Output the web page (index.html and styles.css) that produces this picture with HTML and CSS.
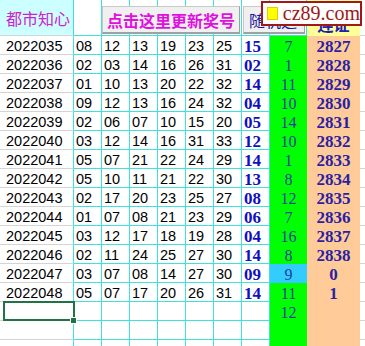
FILE: index.html
```html
<!DOCTYPE html>
<html>
<head>
<meta charset="utf-8">
<link rel="stylesheet" href="styles.css">
</head>
<body>
<div class="head">
  <div class="c h-a">都市知心</div>
  <div class="c h"></div>
  <div class="c h"></div>
  <div class="c h"></div>
  <div class="c h"></div>
  <div class="c h"></div>
  <div class="c h"></div>
  <div class="c h"></div>
  <div class="c h"></div>
  <div class="c h-o">连证</div>
  <div class="c x"></div>
  <button class="btn btn1">点击这里更新奖号</button>
  <button class="btn btn2">随机选号</button>
</div>
<div class="sheet">
  <div class="c a">2022035</div><div class="c n">08</div><div class="c n">12</div><div class="c n">13</div><div class="c n">19</div><div class="c n">23</div><div class="c n">25</div><div class="c b">15</div><div class="c g">7</div><div class="c o">2827</div><div class="c x"></div>
  <div class="c a">2022036</div><div class="c n">02</div><div class="c n">03</div><div class="c n">14</div><div class="c n">16</div><div class="c n">26</div><div class="c n">31</div><div class="c b">02</div><div class="c g">1</div><div class="c o">2828</div><div class="c x"></div>
  <div class="c a">2022037</div><div class="c n">01</div><div class="c n">10</div><div class="c n">13</div><div class="c n">20</div><div class="c n">22</div><div class="c n">32</div><div class="c b">14</div><div class="c g">11</div><div class="c o">2829</div><div class="c x"></div>
  <div class="c a">2022038</div><div class="c n">09</div><div class="c n">12</div><div class="c n">13</div><div class="c n">16</div><div class="c n">24</div><div class="c n">32</div><div class="c b">04</div><div class="c g">10</div><div class="c o">2830</div><div class="c x"></div>
  <div class="c a">2022039</div><div class="c n">02</div><div class="c n">06</div><div class="c n">07</div><div class="c n">10</div><div class="c n">15</div><div class="c n">20</div><div class="c b">05</div><div class="c g">14</div><div class="c o">2831</div><div class="c x"></div>
  <div class="c a">2022040</div><div class="c n">03</div><div class="c n">12</div><div class="c n">14</div><div class="c n">16</div><div class="c n">31</div><div class="c n">33</div><div class="c b">12</div><div class="c g">10</div><div class="c o">2832</div><div class="c x"></div>
  <div class="c a">2022041</div><div class="c n">05</div><div class="c n">07</div><div class="c n">21</div><div class="c n">22</div><div class="c n">24</div><div class="c n">29</div><div class="c b">14</div><div class="c g">1</div><div class="c o">2833</div><div class="c x"></div>
  <div class="c a">2022042</div><div class="c n">05</div><div class="c n">10</div><div class="c n">11</div><div class="c n">21</div><div class="c n">22</div><div class="c n">30</div><div class="c b">13</div><div class="c g">8</div><div class="c o">2834</div><div class="c x"></div>
  <div class="c a">2022043</div><div class="c n">02</div><div class="c n">17</div><div class="c n">20</div><div class="c n">23</div><div class="c n">25</div><div class="c n">27</div><div class="c b">08</div><div class="c g">12</div><div class="c o">2835</div><div class="c x"></div>
  <div class="c a">2022044</div><div class="c n">01</div><div class="c n">07</div><div class="c n">08</div><div class="c n">21</div><div class="c n">23</div><div class="c n">29</div><div class="c b">06</div><div class="c g">7</div><div class="c o">2836</div><div class="c x"></div>
  <div class="c a">2022045</div><div class="c n">03</div><div class="c n">12</div><div class="c n">17</div><div class="c n">18</div><div class="c n">19</div><div class="c n">28</div><div class="c b">04</div><div class="c g">16</div><div class="c o">2837</div><div class="c x"></div>
  <div class="c a">2022046</div><div class="c n">02</div><div class="c n">11</div><div class="c n">24</div><div class="c n">25</div><div class="c n">27</div><div class="c n">30</div><div class="c b">14</div><div class="c g">8</div><div class="c o">2838</div><div class="c x"></div>
  <div class="c a">2022047</div><div class="c n">03</div><div class="c n">07</div><div class="c n">08</div><div class="c n">14</div><div class="c n">27</div><div class="c n">30</div><div class="c b">09</div><div class="c g hl">9</div><div class="c o">0</div><div class="c x"></div>
  <div class="c a">2022048</div><div class="c n">05</div><div class="c n">07</div><div class="c n">17</div><div class="c n">20</div><div class="c n">26</div><div class="c n">31</div><div class="c b">14</div><div class="c g">11</div><div class="c o">1</div><div class="c x"></div>
  <div class="c a sel"></div><div class="c n"></div><div class="c n"></div><div class="c n"></div><div class="c n"></div><div class="c n"></div><div class="c n"></div><div class="c b"></div><div class="c g">12</div><div class="c o"></div><div class="c x"></div>
  <div class="c a"></div><div class="c n"></div><div class="c n"></div><div class="c n"></div><div class="c n"></div><div class="c n"></div><div class="c n"></div><div class="c b"></div><div class="c g"></div><div class="c o"></div><div class="c x"></div>
  <div class="c a"></div><div class="c n"></div><div class="c n"></div><div class="c n"></div><div class="c n"></div><div class="c n"></div><div class="c n"></div><div class="c b"></div><div class="c g"></div><div class="c o"></div><div class="c x"></div>
</div>
<div class="mark"><span class="sq"></span>cz89.com</div>
</body>
</html>
```
FILE: styles.css
```css
html, body {
  margin: 0;
  padding: 0;
  background: #fff;
  overflow: hidden;
  width: 365px;
  height: 346px;
}
.head, .sheet {
  display: grid;
  grid-template-columns: 74px repeat(7, 28px) 37px 53px 1fr;
  width: 365px;
  font-family: "Liberation Sans", "Noto Sans CJK SC", sans-serif;
}
.head {
  grid-template-rows: 36px;
}
.head > * {
  grid-row: 1;
}
.head > .c:nth-child(1) { grid-column: 1; }
.head > .c:nth-child(2) { grid-column: 2; }
.head > .c:nth-child(3) { grid-column: 3; }
.head > .c:nth-child(4) { grid-column: 4; }
.head > .c:nth-child(5) { grid-column: 5; }
.head > .c:nth-child(6) { grid-column: 6; }
.head > .c:nth-child(7) { grid-column: 7; }
.head > .c:nth-child(8) { grid-column: 8; }
.head > .c:nth-child(9) { grid-column: 9; }
.head > .c:nth-child(10) { grid-column: 10; }
.head > .c:nth-child(11) { grid-column: 11; }
.sheet {
  grid-template-rows: repeat(17, 19px);
}
.c {
  box-sizing: border-box;
  border-right: 1px solid #3ee0e0;
  border-bottom: 1px solid #3ee0e0;
  font-size: 14.5px;
  line-height: 19px;
  white-space: nowrap;
  overflow: hidden;
  position: relative;
}
.h-a {
  background: #ccffff;
  border-bottom-color: #d4d4d4;
  color: #d020d0;
  font-family: "Noto Sans CJK SC", sans-serif;
  font-size: 16px;
  line-height: 36px;
  padding-left: 6px;
}
.h-o {
  background: #ffff99;
  border: none;
  color: #2020b0;
  font-family: "Noto Sans CJK SC", sans-serif;
  font-weight: bold;
  font-size: 16px;
  text-align: center;
  line-height: 48px;
}
.x {
  border-right: none;
  border-bottom-color: #d4d4d4;
}
.btn {
  box-sizing: border-box;
  margin: 6px 0 2px 0;
  padding: 0;
  background: #f0f0f0;
  border: 1px solid #c8c8c8;
  border-right-color: #a0a0a0;
  border-bottom: 2px solid #a0a0a0;
  font-family: "Noto Sans CJK SC", sans-serif;
  font-size: 16px;
  line-height: 24px;
  white-space: nowrap;
  overflow: hidden;
  z-index: 1;
}
.btn1 {
  grid-column: 3 / 8;
  margin-right: 2px;
  color: #e010e0;
  font-weight: bold;
}
.btn2 {
  grid-column: 8 / 10;
  margin-left: 1px;
  margin-right: 2px;
  color: #1a1aa0;
  text-align: left;
  padding-left: 5px;
}
.a {
  border-bottom-color: #d4d4d4;
  padding: 1px 0 0 6px;
  color: #000;
}
.n {
  padding: 1px 0 0 2px;
  color: #000;
}
.b {
  padding: 1px 0 0 2px;
  font-family: "Liberation Serif", serif;
  font-weight: bold;
  font-size: 17px;
  color: #1010c0;
}
.g {
  background: #00ff00;
  border: none;
  text-align: center;
  font-family: "Liberation Serif", serif;
  font-size: 16px;
  padding-top: 1px;
  color: #2040a0;
}
.g.hl {
  background: #33ccff;
}
.o {
  background: #ffcc99;
  border: none;
  text-align: center;
  font-family: "Liberation Serif", serif;
  font-weight: bold;
  font-size: 17px;
  padding-top: 1px;
  color: #2b1fa3;
}
.sel {
  overflow: visible;
  z-index: 1;
}
.sel::after {
  content: "";
  position: absolute;
  left: 3px;
  right: -2px;
  top: -1px;
  bottom: -1px;
  border: 2px solid #217346;
}
.sel::before {
  content: "";
  position: absolute;
  right: -4px;
  bottom: -4px;
  width: 5px;
  height: 5px;
  background: #217346;
  border: 1px solid #fff;
  z-index: 2;
}
.mark {
  position: absolute;
  left: 261px;
  top: 1px;
  width: 101px;
  height: 25px;
  box-sizing: border-box;
  border: 2px solid #a01818;
  background: #fff;
  color: #a01818;
  font-family: "Liberation Serif", serif;
  font-size: 20px;
  line-height: 21px;
  display: flex;
  align-items: center;
  gap: 5px;
  padding-left: 4px;
  z-index: 3;
}
.sq {
  display: block;
  width: 13px;
  height: 13px;
  background: #ffff00;
  box-sizing: border-box;
  border: 1px solid #e0d000;
}
```
